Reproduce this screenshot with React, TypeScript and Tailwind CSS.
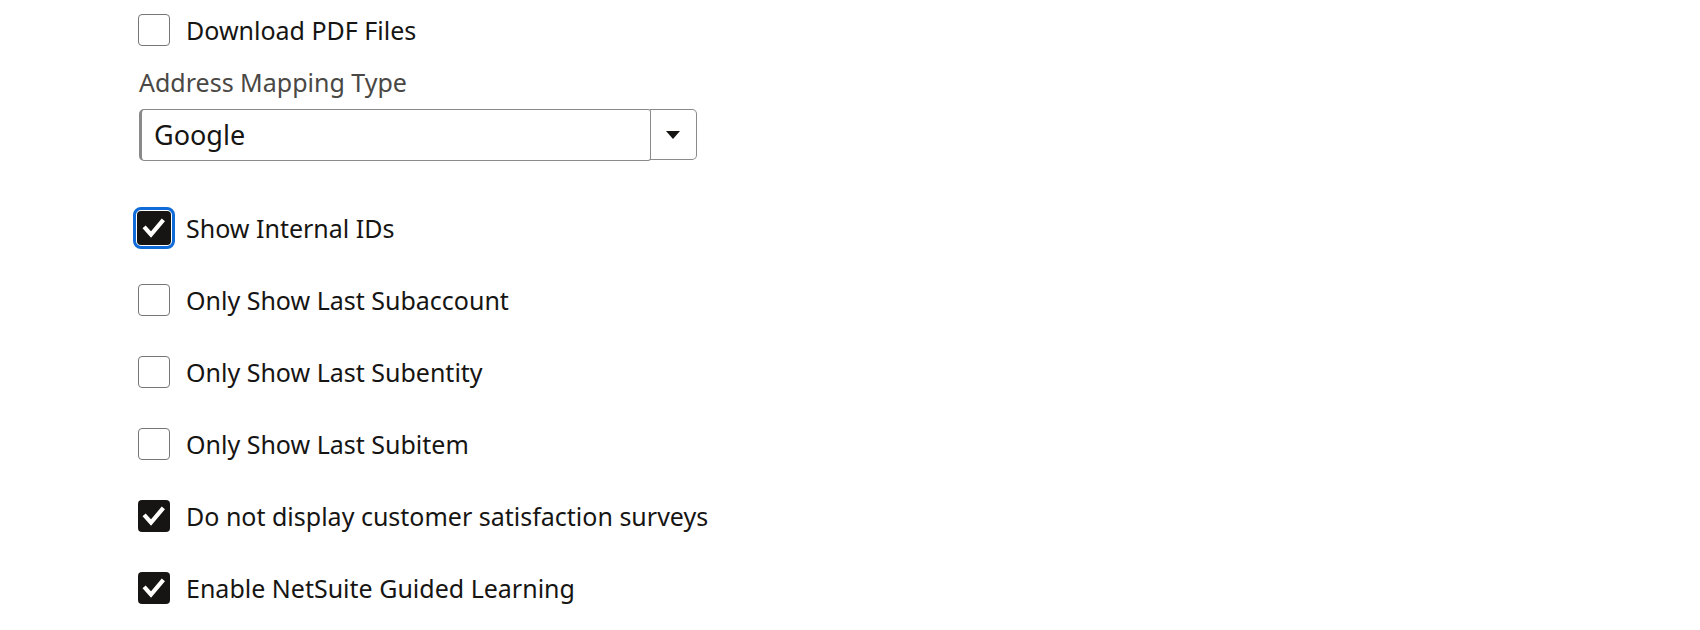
import React from "react";

function Check({ checked, focused }: { checked?: boolean; focused?: boolean }) {
  return (
    <div
      className={
        "relative flex shrink-0 items-center justify-center rounded-[4px] " +
        (focused ? "-mx-[1px] h-[34px] w-[34px] " : "h-[32px] w-[32px] ") +
        (checked ? "bg-[#161513]" : "border-[1.5px] border-[#767676] bg-white") +
        (focused ? " outline outline-[3px] outline-offset-[1.5px] outline-[#0f6bd7]" : "")
      }
    >
      {checked && (
        <svg width="32" height="32" viewBox="0 0 32 32">
          <path d="M7.5 16.5 L13 22.5 L24 9.5" fill="none" stroke="white" strokeWidth="4.2" strokeLinecap="square" strokeLinejoin="miter" />
        </svg>
      )}
    </div>
  );
}

function Row({ label, checked, focused }: { label: string; checked?: boolean; focused?: boolean }) {
  return (
    <div className="flex h-[72px] items-center gap-[16px]">
      <Check checked={checked} focused={focused} />
      <span className="pt-[2px] text-[25px] text-[#161513]">{label}</span>
    </div>
  );
}

export default function App() {
  return (
    <div className="h-[630px] w-[1700px] bg-white pl-[138px]" style={{ fontFamily: '"Noto Sans", "Open Sans", sans-serif' }}>
      <div className="flex h-[60px] items-center gap-[16px]">
        <Check />
        <span className="pt-[2px] text-[25px] text-[#161513]">Download PDF Files</span>
      </div>
      <div className="mt-[2px] h-[40px] pl-[1px] text-[25px] leading-[40px] text-[#4a4845]">Address Mapping Type</div>
      <div className="mt-[7px] flex h-[52px] w-[559px] pl-[1px]">
        <div className="flex h-[52px] w-[512px] items-center rounded-l-[5px] rounded-r-[3px] border-[1.5px] border-l-[3px] border-[#8a8a8a] pl-[12px] text-[27px] text-[#161513]">
          Google
        </div>
        <div className="-ml-[1px] flex h-[51px] w-[47px] items-center justify-center rounded-r-[5px] border-[1.5px] border-l-0 border-[#8a8a8a]">
          <svg width="14" height="8" viewBox="0 0 14 8">
            <path d="M0 0 L14 0 L7 8 Z" fill="#161513" />
          </svg>
        </div>
      </div>
      <div className="mt-[31px]">
        <Row label="Show Internal IDs" checked focused />
        <Row label="Only Show Last Subaccount" />
        <Row label="Only Show Last Subentity" />
        <Row label="Only Show Last Subitem" />
        <Row label="Do not display customer satisfaction surveys" checked />
        <Row label="Enable NetSuite Guided Learning" checked />
      </div>
    </div>
  );
}
